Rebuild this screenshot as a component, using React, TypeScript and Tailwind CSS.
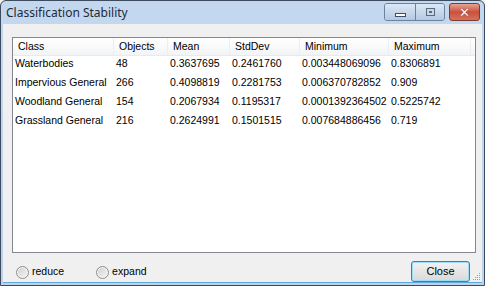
const font = { fontFamily: '"Liberation Sans", Arial, sans-serif' };

type Row = { cls: string; objects: string; mean: string; sd: string; min: string; max: string };

const rows: Row[] = [
  { cls: "Waterbodies", objects: "48", mean: "0.3637695", sd: "0.2461760", min: "0.003448069096", max: "0.8306891" },
  { cls: "Impervious General", objects: "266", mean: "0.4098819", sd: "0.2281753", min: "0.006370782852", max: "0.909" },
  { cls: "Woodland General", objects: "154", mean: "0.2067934", sd: "0.1195317", min: "0.0001392364502", max: "0.5225742" },
  { cls: "Grassland General", objects: "216", mean: "0.2624991", sd: "0.1501515", min: "0.007684886456", max: "0.719" },
];

const cols = [
  { label: "Class", w: "w-[101px]" },
  { label: "Objects", w: "w-[54px]" },
  { label: "Mean", w: "w-[62px]" },
  { label: "StdDev", w: "w-[70px]" },
  { label: "Minimum", w: "w-[89px]" },
  { label: "Maximum", w: "w-[82px]" },
];

const Radio = ({ label }: { label: string }) => (
  <div className="flex items-center gap-[3px]">
    <span className="w-[13px] h-[13px] rounded-full border border-[#8e8f8f] bg-gradient-to-br from-[#cfcfcf] to-[#f6f6f6] shadow-[inset_0_0_0_1px_#f4f4f4]" />
    <span className="text-[10.5px] text-black">{label}</span>
  </div>
);

export default function App() {
  return (
    <div className="w-[485px] h-[286px] bg-[#f0f0f0]" style={font}>
      <div className="w-full h-full flex flex-col border border-[#3c4c5e] rounded-t-[6px] bg-gradient-to-b from-[#c3d7ee] to-[#bdd3ea]">
        {/* title bar */}
        <div className="h-[23px] flex items-center pl-[5px] relative">
          <span className="text-[12px] text-[#1e2a37]" style={{ fontFamily: '"Noto Sans", sans-serif' }}>
            Classification Stability
          </span>
          <div className="absolute right-[4px] top-[2px] flex items-start gap-[4px]">
            <div className="flex border border-[#6c83a0] rounded-[3px] overflow-hidden h-[18px]">
              <div className="w-[31px] h-full flex items-center justify-center bg-gradient-to-b from-[#dce8f5] to-[#b4c9e2] border-r border-[#6c83a0]">
                <span className="w-[11px] h-[4px] bg-white border border-[#3e4f63] mt-[5px]" />
              </div>
              <div className="w-[28px] h-full flex items-center justify-center bg-gradient-to-b from-[#dce8f5] to-[#b4c9e2]">
                <span className="w-[9px] h-[8px] border border-[#5a6b80] bg-[#c9d6e4] flex items-center justify-center">
                  <span className="w-[3px] h-[2px] bg-[#5a6b80]" />
                </span>
              </div>
            </div>
            <div className="w-[31px] h-[18px] rounded-[3px] border border-[#7d3a30] bg-gradient-to-b from-[#e7a293] via-[#c9513d] to-[#d6705c] flex items-center justify-center">
              <span className="text-white font-bold text-[13px] leading-none" style={{ fontFamily: '"DejaVu Sans", sans-serif', textShadow: "0 0 1px #5a1c12" }}>
                ✕
              </span>
            </div>
          </div>
        </div>

        {/* client area */}
        <div className="flex-1 mx-[2px] mb-[2px] border-b border-[#5fa8d8] bg-[#f0f0f0] flex flex-col pl-[9px] pr-[6px] pt-[13px] relative">
          <div className="h-[216px] border border-[#828790] bg-white">
            <div className="flex h-[18px] bg-gradient-to-b from-white to-[#f3f4f6] border-b border-[#eaeaea]">
              {cols.map((c) => (
                <div key={c.label} className={`${c.w} border-r border-[#eceef1] pl-[5px] flex items-center text-[10.5px] text-black`}>
                  {c.label}
                </div>
              ))}
              <div className="flex-1" />
            </div>
            {rows.map((r) => (
              <div key={r.cls} className="flex h-[19px] items-center text-[10.5px] text-black pb-[3px]">
                <div className="w-[101px] pl-[2px]">{r.cls}</div>
                <div className="w-[54px] pl-[2px]">{r.objects}</div>
                <div className="w-[62px] pl-[2px]">{r.mean}</div>
                <div className="w-[70px] pl-[2px]">{r.sd}</div>
                <div className="w-[89px] pl-[2px]">{r.min}</div>
                <div className="w-[82px] pl-[2px]">{r.max}</div>
              </div>
            ))}
          </div>

          <div className="flex items-center mt-[9px] pl-[4px] pr-[6px]">
            <Radio label="reduce" />
            <div className="ml-[32px]">
              <Radio label="expand" />
            </div>
            <div className="ml-auto w-[59px] h-[21px] rounded-[3px] border border-[#3c7fb1] shadow-[inset_0_0_0_1px_#9fdcf7] bg-gradient-to-b from-[#f2f2f2] to-[#d9d9d9] flex items-center justify-center text-[11px] text-black mt-[-1px]">
              Close
            </div>
          </div>

          <svg className="absolute right-[1px] bottom-[1px]" width="10" height="10" viewBox="0 0 10 10">
            <g fill="#a0a0a0">
              <rect x="8" y="2" width="1" height="1" />
              <rect x="6" y="4" width="1" height="1" />
              <rect x="8" y="4" width="1" height="1" />
              <rect x="4" y="6" width="1" height="1" />
              <rect x="6" y="6" width="1" height="1" />
              <rect x="8" y="6" width="1" height="1" />
              <rect x="2" y="8" width="1" height="1" />
              <rect x="4" y="8" width="1" height="1" />
              <rect x="6" y="8" width="1" height="1" />
              <rect x="8" y="8" width="1" height="1" />
            </g>
          </svg>
        </div>
      </div>
    </div>
  );
}
